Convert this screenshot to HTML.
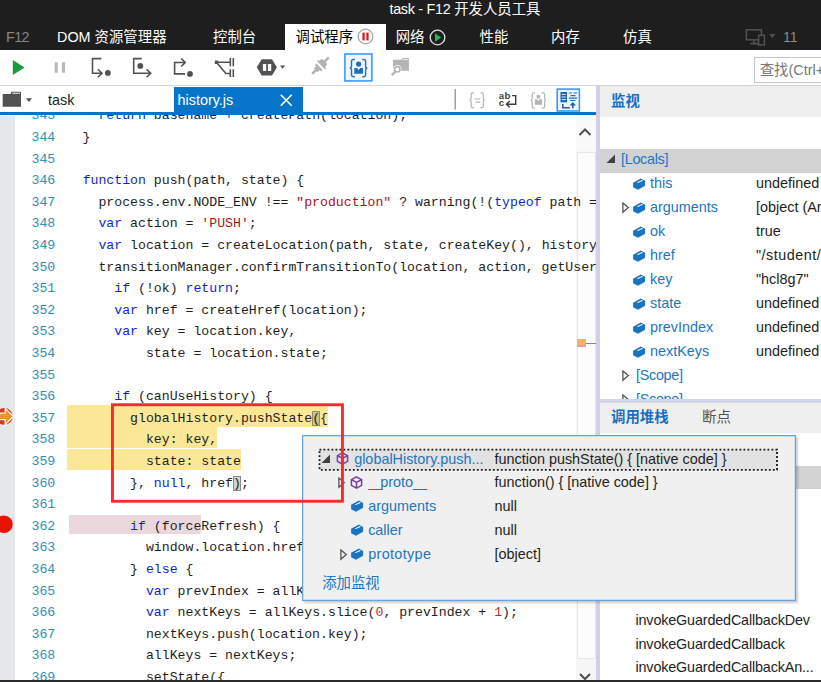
<!DOCTYPE html>
<html lang="zh-CN">
<head>
<meta charset="utf-8">
<title>task - F12 开发人员工具</title>
<style>
html,body{margin:0;padding:0;}
body{width:821px;height:682px;overflow:hidden;position:relative;background:#fff;font-family:"Liberation Sans","Noto Sans CJK SC",sans-serif;font-size:14px;color:#1e1e1e;}
.abs{position:absolute;}
#top{z-index:5;position:absolute;left:0;top:0;width:821px;height:50.400px;background:#1e1e1e;}
#title{position:absolute;left:0;top:0;width:930px;text-align:center;color:#fff;font-size:14.400px;line-height:18px;white-space:nowrap;}
.mt{position:absolute;top:24px;height:26px;line-height:26px;color:#fff;font-size:14.400px;white-space:nowrap;}
#mt-act{background:#fff;color:#000;left:284.500px;width:101.500px;top:23.600px;height:27px;line-height:26.800px;}
#toolbar{position:absolute;left:0;top:50px;width:821px;height:35px;background:#fff;border-bottom:1px solid #d4d4d4;}
#search{position:absolute;left:754.200px;top:7px;width:80px;height:26px;border:1px solid #c2c6e2;box-sizing:border-box;color:#777;font-size:14.400px;line-height:24.500px;padding-left:4.500px;white-space:nowrap;}
#filetabs{position:absolute;left:0;top:86px;width:597px;height:26px;background:#fff;}
#blueline{position:absolute;left:0;top:111.900px;width:596px;height:3.400px;z-index:3;background:#0574c9;}
#ftab{position:absolute;left:174px;top:0.900px;width:129px;height:25.100px;background:#0574c9;color:#fff;font-size:14.400px;line-height:26px;}
#code{position:absolute;left:0;top:113px;width:597px;height:569px;overflow:hidden;z-index:2;font-family:"Liberation Mono","DejaVu Sans Mono",monospace;font-size:13.2px;}
#gutter{position:absolute;left:0;top:3px;width:15px;height:566px;background:#e6e7e9;}
.ln{position:absolute;left:0;height:21.6px;line-height:21.6px;white-space:pre;width:1200px;}
.num{position:absolute;left:31.500px;color:#2b91af;}
.src{position:absolute;left:66.800px;color:#1e1e1e;}
.k{color:#0f1ed8;}
.s{color:#a31515;}
.n{color:#c03030;}
.hl{background:#fae896;}
.br{background:rgba(120,125,110,0.350);outline:1px solid #8c8c78;outline-offset:-1px;}
#vscroll{position:absolute;left:576px;top:114px;width:20px;height:568px;background:#f6f6f6;z-index:1;}
#split{position:absolute;left:596px;top:86px;width:3.600px;height:596px;background:#d0d2e4;z-index:3;}
#right{position:absolute;left:600px;top:86px;width:221px;height:596px;background:#fff;overflow:hidden;}
.ph{position:absolute;left:0;width:221px;height:30.700px;background:#efefef;}
.pht{position:absolute;top:0;line-height:30px;font-size:14.400px;white-space:nowrap;}
.pht.a{color:#1470c4;font-weight:bold;}
.row{position:absolute;left:0;width:400px;height:24px;line-height:24px;font-size:14.400px;white-space:nowrap;}
.row .nm{position:absolute;color:#2176c2;}
.row .vl{position:absolute;left:156px;color:#1e1e1e;}
.cube{position:absolute;}
.tri{position:absolute;}
#popup{z-index:4;position:absolute;left:301.800px;top:435.300px;width:494.300px;height:165.400px;box-sizing:border-box;border:1px solid #66a4e0;background:#f0f0f0;box-shadow:1.500px 1.500px 2px rgba(0,0,0,0.200), inset 0 0 0 1px rgba(150,195,240,0.450);}
#pin{position:absolute;left:0.400px;top:0.900px;width:492px;height:160px;white-space:nowrap;}
.prow{position:absolute;left:1.300px;width:489px;height:24px;line-height:24px;font-size:14.400px;white-space:nowrap;}
.prow .nm{position:absolute;color:#2176c2;margin-left:0.700px;}
.prow .vl{position:absolute;left:190px;color:#1e1e1e;}
#redbox{z-index:6;position:absolute;left:108px;top:400px;}
#bottom{z-index:9;position:absolute;left:0;top:679.500px;width:821px;height:3px;background:#2a2a2a;}
</style>
</head>
<body>
<div id="top">
  <div id="title"><span style="letter-spacing:-0.300px;">task - F12 </span>开发人员工具</div>
  <div class="mt" style="left:6px;color:#858585;letter-spacing:-0.600px;">F12</div>
  <div class="mt" style="left:57px;">DOM 资源管理器</div>
  <div class="mt" style="left:213px;">控制台</div>
  <div class="mt" id="mt-act"><span style="position:absolute;left:11px;">调试程序</span>
    <svg class="abs" style="left:72.300px;top:4.800px" width="17" height="17" viewBox="0 0 17 17"><circle cx="8.500" cy="8.500" r="7.300" fill="#fff" stroke="#a8a8a8" stroke-width="1.300"/><rect x="5.400" y="4.600" width="2.300" height="7.800" fill="#d01c24"/><rect x="9.300" y="4.600" width="2.300" height="7.800" fill="#d01c24"/></svg>
  </div>
  <div class="mt" style="left:395.700px;">网络</div>
  <svg class="abs" style="left:429px;top:28.600px" width="17" height="17" viewBox="0 0 17 17"><circle cx="8.500" cy="8.500" r="7.300" fill="none" stroke="#e4e4e4" stroke-width="1.300"/><path d="M6 4.300 L12.300 8.500 L6 12.700 Z" fill="#2cb34a"/></svg>
  <div class="mt" style="left:479.500px;">性能</div>
  <div class="mt" style="left:551px;">内存</div>
  <div class="mt" style="left:623px;">仿真</div>
  <svg class="abs" style="left:744px;top:27px" width="34" height="22" viewBox="744 27 34 22"><rect x="746.400" y="29.800" width="15" height="10" fill="none" stroke="#525252" stroke-width="1.500"/><path d="M754 40 V43.400 M750.500 43.600 H758" stroke="#525252" stroke-width="1.600"/><rect x="758.600" y="35.300" width="5.800" height="9.600" fill="#1e1e1e" stroke="#525252" stroke-width="1.500"/><path d="M769.300 34 H775.300 L772.300 38 Z" fill="#525252"/></svg>
  <div class="mt" style="left:783px;color:#8a8a8a;font-size:14px;">11</div>
</div>

<div id="toolbar">
  <svg class="abs" style="left:0;top:0" width="821" height="35" viewBox="0 50 821 35">
    <!-- play -->
    <path d="M12.800 60 L24.600 67.500 L12.800 75 Z" fill="#189a3c"/>
    <!-- pause -->
    <rect x="54.600" y="62.300" width="3.200" height="10.400" fill="#b9b9b9"/><rect x="61.900" y="62.300" width="3.200" height="10.400" fill="#b9b9b9"/>
    <g fill="none" stroke="#525252" stroke-width="1.600">
      <!-- step into -->
      <path d="M101.300 58.600 H92.500 V73.200 H101.800 M97.900 69.200 L102 73.200 L97.900 77.200"/>
      <!-- step over -->
      <path d="M141.700 58.600 H133.700 V73.200 H150.400 M146.600 69.200 L150.700 73.200 L146.600 77.200"/>
      <!-- step out -->
      <path d="M185 73.900 H174.600 V62.500 H184.600 M181.200 58.500 L185.200 62.500 L181.200 66.500"/>
      <!-- worker -->
      <path d="M216.400 62.200 H230.300 M216.400 62.200 L225.900 73.500 H230.300 M230.300 58.100 V66.300 M233.300 58.100 V66.300 M230.300 69.300 V77.100 M233.300 69.300 V77.100"/>
    </g>
    <g fill="#525252">
      <circle cx="107.800" cy="72.900" r="2.900"/>
      <circle cx="140.300" cy="65.900" r="2.900"/>
      <circle cx="190" cy="73.900" r="2.900"/>
      <rect x="214.800" y="60.600" width="3.400" height="3.400"/>
      <!-- exceptions -->
      <path d="M261.700 59.300 H272 L276.900 67.350 L272 75.400 H261.700 L256.800 67.350 Z"/>
      <path d="M280 65.500 H285.200 L282.600 68.700 Z"/>
    </g>
    <rect x="262.900" y="63.900" width="3.300" height="7.200" rx="0.600" fill="#fff"/><rect x="267.900" y="63.900" width="3.300" height="7.200" rx="0.600" fill="#fff"/>
    <!-- plug -->
    <g transform="translate(320.300 65.800) rotate(-45)">
      <rect x="-11.500" y="-1.200" width="6" height="2.400" fill="#b4b4b4"/>
      <path d="M-6.500 -2.600 H-3.500 V-4.300 H-1.200 V4.300 H-3.500 V2.600 H-6.500 Z" fill="#b4b4b4"/>
      <path d="M1.200 -4.300 H3.400 Q6.500 -4.300 6.500 -1.500 V1.500 Q6.500 4.300 3.400 4.300 H1.200 Z" fill="#b4b4b4"/>
      <rect x="6" y="-1.200" width="6" height="2.400" fill="#b4b4b4"/>
    </g>
    <path d="M317.400 60.600 L325.800 69" stroke="#b4b4b4" stroke-width="1.400"/>
    <!-- just my code selected -->
    <rect x="344.900" y="54" width="27" height="26.900" fill="#f0f5fb" stroke="#3a9af8" stroke-width="1.600"/>
    <g fill="none" stroke="#1e74bc" stroke-width="1.400">
      <path d="M354.800 59.500 H353.300 Q351.500 59.500 351.500 61.300 V66 Q351.500 68.100 349.700 68.100 Q351.500 68.100 351.500 70.200 V75 Q351.500 76.700 353.300 76.700 H354.800"/>
      <path d="M362.300 59.500 H363.800 Q365.600 59.500 365.600 61.300 V66 Q365.600 68.100 367.400 68.100 Q365.600 68.100 365.600 70.200 V75 Q365.600 76.700 363.800 76.700 H362.300"/>
    </g>
    <circle cx="358.600" cy="64.100" r="2.600" fill="#1a72bc"/>
    <path d="M354.300 68 H357 L358.650 70 L360.300 68 H363 V73.800 H354.300 Z" fill="#1a72bc"/>
    <!-- find in files -->
    <path d="M393 59.800 H401.500 L402.600 58.100 H408.900 V70.700 H393 Z" fill="#b4b4b4"/>
    <rect x="403" y="58.900" width="5.200" height="1.200" fill="#e8e8e8"/>
    <circle cx="397.300" cy="69.300" r="4.200" fill="#fff"/>
    <circle cx="397.300" cy="69.300" r="2.700" fill="#fff" stroke="#b4b4b4" stroke-width="1.700"/>
    <path d="M395.300 71.500 L391.900 75.200" stroke="#b4b4b4" stroke-width="2.300"/>
  </svg>
  <div id="search">查找(Ctrl+F)</div>
</div>

<div id="filetabs">
  <svg class="abs" style="left:0;top:0" width="597" height="26" viewBox="0 86 597 26">
    <!-- folder -->
    <path d="M2.700 94 H10.500 L11.500 91.700 H20.200 Q21 91.700 21 92.500 V106.800 H2.700 Z" fill="#525252"/>
    <rect x="12.300" y="92.700" width="7.700" height="1.100" fill="#fff" opacity="0.850"/>
    <path d="M26 98.300 H32 L29 101.900 Z" fill="#525252"/>
    <!-- separator -->
    <rect x="454.600" y="89" width="1.200" height="20.600" fill="#8a8a8a"/>
    <!-- pretty print -->
    <g transform="translate(477.200 100.300) scale(0.860) translate(-358.550 -68.100)">
      <g fill="none" stroke="#b4b4b4" stroke-width="1.400">
        <path d="M354.800 59.500 H353.300 Q351.500 59.500 351.500 61.300 V66 Q351.500 68.100 349.700 68.100 Q351.500 68.100 351.500 70.200 V75 Q351.500 76.700 353.300 76.700 H354.800"/>
        <path d="M362.300 59.500 H363.800 Q365.600 59.500 365.600 61.300 V66 Q365.600 68.100 367.400 68.100 Q365.600 68.100 365.600 70.200 V75 Q365.600 76.700 363.800 76.700 H362.300"/>
        <path d="M355.500 66.600 H362 M356.800 70.200 H362"/>
      </g>
    </g>
    <!-- word wrap -->
    <path d="M512 95.600 H515.700 V104.200 H506.600 M509.700 101.100 L506.400 104.200 L509.700 107.300" fill="none" stroke="#3c3c3c" stroke-width="1.400"/>
    <text x="498.800" y="99.200" font-family="Liberation Sans, sans-serif" font-size="9.600" font-weight="bold" letter-spacing="0.300" fill="#444">ab</text>
    <text x="498.800" y="106" font-family="Liberation Sans, sans-serif" font-size="9.600" font-weight="bold" fill="#444">c</text>
    <!-- just my code gray -->
    <g transform="translate(538.400 100.450) scale(0.880) translate(-358.550 -68.100)">
      <g fill="none" stroke="#b4b4b4" stroke-width="1.400">
        <path d="M354.800 59.500 H353.300 Q351.500 59.500 351.500 61.300 V66 Q351.500 68.100 349.700 68.100 Q351.500 68.100 351.500 70.200 V75 Q351.500 76.700 353.300 76.700 H354.800"/>
        <path d="M362.300 59.500 H363.800 Q365.600 59.500 365.600 61.300 V66 Q365.600 68.100 367.400 68.100 Q365.600 68.100 365.600 70.200 V75 Q365.600 76.700 363.800 76.700 H362.300"/>
      </g>
      <circle cx="358.600" cy="63.800" r="2.300" fill="#b4b4b4"/>
      <path d="M354.600 66.800 H357 L358.650 68.800 L360.300 66.800 H362.700 V73 H354.600 Z" fill="#b4b4b4"/>
    </g>
    <!-- selected -->
    <rect x="557.200" y="89.100" width="22.200" height="21.900" fill="#eef4fb" stroke="#3a9af8" stroke-width="1.600"/>
    <rect x="560.500" y="92" width="6.500" height="10.300" fill="#1f64a8"/>
    <path d="M561.700 94.400 H565.800 M561.700 97 H565.800 M561.700 99.600 H565.800" stroke="#fff" stroke-width="0.900"/>
    <path d="M568.800 93 H572 M573.500 93 H577.100 M570.500 95.600 H575.500 M568.800 98.100 H577.100 M570 100.500 H575.500" stroke="#2a72b8" stroke-width="1.200"/>
    <path d="M562.800 104.100 V107.800 H569.800" fill="none" stroke="#1f64a8" stroke-width="1.500"/>
    <path d="M569.600 105.600 L572.800 102.100 L576 105.600 Z" fill="#1f64a8"/>
    <rect x="572" y="104.500" width="1.600" height="3.900" fill="#1f64a8"/>
  </svg>
  <div class="abs" style="left:48px;top:0;line-height:28px;font-size:14.400px;color:#1e1e1e;">task</div>
  <div id="ftab"><span class="abs" style="left:3.500px;top:0.200px;">history.js</span>
    <svg class="abs" style="left:106.300px;top:7.600px" width="12.500" height="12.500" viewBox="0 0 13 13"><path d="M0.800 0.800 L12.200 12.200 M12.200 0.800 L0.800 12.200" stroke="#fff" stroke-width="1.700"/></svg>
  </div>
</div>
<div id="blueline"></div>

<div id="code">
  <div id="gutter"></div>
  <!-- highlight backgrounds -->
  <div class="abs" style="left:67px;top:292.400px;width:261px;height:21.450px;background:#fae896;"></div>
  <div class="abs" style="left:67px;top:314px;width:150px;height:21.450px;background:#fae896;"></div>
  <div class="abs" style="left:67px;top:335.600px;width:174px;height:21.400px;background:#fae896;"></div>
  <div class="abs" style="left:68.500px;top:401.800px;width:132px;height:19.400px;background:#ead8dc;"></div>
<div class="ln" style="top:-7.70px"><span class="num">343</span><span class="src">    <span class="k">return</span> basename + createPath(location);</span></div>
<div class="ln" style="top:13.90px"><span class="num">344</span><span class="src">  }</span></div>
<div class="ln" style="top:35.50px"><span class="num">345</span><span class="src"></span></div>
<div class="ln" style="top:57.10px"><span class="num">346</span><span class="src">  <span class="k">function</span> push(path, state) {</span></div>
<div class="ln" style="top:78.70px"><span class="num">347</span><span class="src">    process.env.NODE_ENV !== <span class="s">"production"</span> ? warning(!(<span class="k">typeof</span> path === </span></div>
<div class="ln" style="top:100.30px"><span class="num">348</span><span class="src">    <span class="k">var</span> action = <span class="s">'PUSH'</span>;</span></div>
<div class="ln" style="top:121.90px"><span class="num">349</span><span class="src">    <span class="k">var</span> location = createLocation(path, state, createKey(), history.location);</span></div>
<div class="ln" style="top:143.50px"><span class="num">350</span><span class="src">    transitionManager.confirmTransitionTo(location, action, getUserConfirmation, </span></div>
<div class="ln" style="top:165.10px"><span class="num">351</span><span class="src">      <span class="k">if</span> (!ok) <span class="k">return</span>;</span></div>
<div class="ln" style="top:186.70px"><span class="num">352</span><span class="src">      <span class="k">var</span> href = createHref(location);</span></div>
<div class="ln" style="top:208.30px"><span class="num">353</span><span class="src">      <span class="k">var</span> key = location.key,</span></div>
<div class="ln" style="top:229.90px"><span class="num">354</span><span class="src">          state = location.state;</span></div>
<div class="ln" style="top:251.50px"><span class="num">355</span><span class="src"></span></div>
<div class="ln" style="top:273.10px"><span class="num">356</span><span class="src">      <span class="k">if</span> (canUseHistory) {</span></div>
<div class="ln" style="top:294.70px"><span class="num">357</span><span class="src">        <span class="hl">globalHistory.pushState</span><span class="br">(</span>{</span></div>
<div class="ln" style="top:316.30px"><span class="num">358</span><span class="src">          <span class="hl">key: key,</span></span></div>
<div class="ln" style="top:337.90px"><span class="num">359</span><span class="src">          <span class="hl">state: state</span></span></div>
<div class="ln" style="top:359.50px"><span class="num">360</span><span class="src">        }, <span class="k">null</span>, href<span class="br">)</span>;</span></div>
<div class="ln" style="top:381.10px"><span class="num">361</span><span class="src"></span></div>
<div class="ln" style="top:402.70px"><span class="num">362</span><span class="src">        <span class="k">if</span> (forceRefresh) {</span></div>
<div class="ln" style="top:424.30px"><span class="num">363</span><span class="src">          window.location.href = href;</span></div>
<div class="ln" style="top:445.90px"><span class="num">364</span><span class="src">        } <span class="k">else</span> {</span></div>
<div class="ln" style="top:467.50px"><span class="num">365</span><span class="src">          <span class="k">var</span> prevIndex = allKeys.indexOf(history.location.key);</span></div>
<div class="ln" style="top:489.10px"><span class="num">366</span><span class="src">          <span class="k">var</span> nextKeys = allKeys.slice(<span class="n">0</span>, prevIndex + <span class="n">1</span>);</span></div>
<div class="ln" style="top:510.70px"><span class="num">367</span><span class="src">          nextKeys.push(location.key);</span></div>
<div class="ln" style="top:532.30px"><span class="num">368</span><span class="src">          allKeys = nextKeys;</span></div>
<div class="ln" style="top:553.90px"><span class="num">369</span><span class="src">          setState({</span></div>
  <!-- breakpoint markers -->
  <svg class="abs" style="left:0;top:290px" width="16" height="135" viewBox="0 403 16 135">
    <circle cx="4.300" cy="416.400" r="8.400" fill="#e2341c"/>
    <path d="M-2 413.100 H5.200 V408.400 L13.400 416.400 L5.200 424.400 V419.700 H-2 Z" fill="#f6921e" stroke="#fff" stroke-width="1.300" stroke-linejoin="miter"/>
    <circle cx="3.900" cy="524.200" r="8.800" fill="#e81208"/>
  </svg>

</div>

<div id="vscroll">
  <div class="abs" style="left:0;top:0;width:20px;height:37px;background:#f9f9f9;"></div>
  <div class="abs" style="left:0.500px;top:37.500px;width:19px;height:507px;box-sizing:border-box;border:1px solid #e6e6e6;background:#fcfcfc;"></div>
  <svg class="abs" style="left:2px;top:12.500px" width="14" height="10" viewBox="0 0 14 10"><path d="M1.500 8 L7 2.500 L12.500 8" fill="none" stroke="#505050" stroke-width="2"/></svg>
  <svg class="abs" style="left:2px;top:557.500px" width="14" height="10" viewBox="0 0 14 10"><path d="M2 2 L7 7 L12 2" fill="none" stroke="#505050" stroke-width="2"/></svg>
  <div class="abs" style="left:1px;top:225px;width:9px;height:6px;background:#f0b46e;"></div><div class="abs" style="left:1px;top:231px;width:9px;height:2px;background:#e89aa0;"></div>
  <div class="abs" style="left:10px;top:228.500px;width:10px;height:1.500px;background:#7f7fc8;"></div>
</div>
<div id="split"></div>

<div id="right">
  <div class="ph" style="top:0;"><span class="pht a" style="left:11px;">监视</span></div>
  <div class="abs" style="left:0;top:63px;width:221px;height:24px;background:#d2d2d2;"></div>
  <div class="row" style="top:61px;"><svg class="tri" style="left:6px;top:7px" width="10" height="10" viewBox="0 0 10 10"><path d="M9 0.500 V9 H0.500 Z" fill="#404040"/></svg><span class="nm" style="left:21px;letter-spacing:-0.300px;">[Locals]</span></div>
<div class="row" style="top:85px;"><svg class="cube" style="left:33px;top:6.800px" width="13" height="12" viewBox="0 0 13 12"><path d="M0.100 4.700 L7.900 0.400 L12.100 2.900 L12.100 7.700 L5 11.800 L0.100 9.200 Z" fill="#1a74c2"/><path d="M3.900 4.400 L8.900 2.100 L9.900 2.700 L4.900 5 Z" fill="#fff"/></svg><span class="nm" style="left:50px;">this</span><span class="vl">undefined</span></div>
<div class="row" style="top:109px;"><svg class="tri" style="left:21.5px;top:7px" width="8" height="12" viewBox="0 0 8 12"><path d="M0.900 0.900 L6.300 5.600 L0.900 10.300 Z" fill="none" stroke="#555" stroke-width="1.300"/></svg><svg class="cube" style="left:33px;top:6.800px" width="13" height="12" viewBox="0 0 13 12"><path d="M0.100 4.700 L7.900 0.400 L12.100 2.900 L12.100 7.700 L5 11.800 L0.100 9.200 Z" fill="#1a74c2"/><path d="M3.900 4.400 L8.900 2.100 L9.900 2.700 L4.900 5 Z" fill="#fff"/></svg><span class="nm" style="left:50px;">arguments</span><span class="vl">[object (Arguments)]</span></div>
<div class="row" style="top:133px;"><svg class="cube" style="left:33px;top:6.800px" width="13" height="12" viewBox="0 0 13 12"><path d="M0.100 4.700 L7.900 0.400 L12.100 2.900 L12.100 7.700 L5 11.800 L0.100 9.200 Z" fill="#1a74c2"/><path d="M3.900 4.400 L8.900 2.100 L9.900 2.700 L4.900 5 Z" fill="#fff"/></svg><span class="nm" style="left:50px;">ok</span><span class="vl">true</span></div>
<div class="row" style="top:157px;"><svg class="cube" style="left:33px;top:6.800px" width="13" height="12" viewBox="0 0 13 12"><path d="M0.100 4.700 L7.900 0.400 L12.100 2.900 L12.100 7.700 L5 11.800 L0.100 9.200 Z" fill="#1a74c2"/><path d="M3.900 4.400 L8.900 2.100 L9.900 2.700 L4.900 5 Z" fill="#fff"/></svg><span class="nm" style="left:50px;">href</span><span class="vl" style="letter-spacing:0.500px;">"/student/task"</span></div>
<div class="row" style="top:181px;"><svg class="cube" style="left:33px;top:6.800px" width="13" height="12" viewBox="0 0 13 12"><path d="M0.100 4.700 L7.900 0.400 L12.100 2.900 L12.100 7.700 L5 11.800 L0.100 9.200 Z" fill="#1a74c2"/><path d="M3.900 4.400 L8.900 2.100 L9.900 2.700 L4.900 5 Z" fill="#fff"/></svg><span class="nm" style="left:50px;">key</span><span class="vl">"hcl8g7"</span></div>
<div class="row" style="top:205px;"><svg class="cube" style="left:33px;top:6.800px" width="13" height="12" viewBox="0 0 13 12"><path d="M0.100 4.700 L7.900 0.400 L12.100 2.900 L12.100 7.700 L5 11.800 L0.100 9.200 Z" fill="#1a74c2"/><path d="M3.900 4.400 L8.900 2.100 L9.900 2.700 L4.900 5 Z" fill="#fff"/></svg><span class="nm" style="left:50px;">state</span><span class="vl">undefined</span></div>
<div class="row" style="top:229px;"><svg class="cube" style="left:33px;top:6.800px" width="13" height="12" viewBox="0 0 13 12"><path d="M0.100 4.700 L7.900 0.400 L12.100 2.900 L12.100 7.700 L5 11.800 L0.100 9.200 Z" fill="#1a74c2"/><path d="M3.900 4.400 L8.900 2.100 L9.900 2.700 L4.900 5 Z" fill="#fff"/></svg><span class="nm" style="left:50px;">prevIndex</span><span class="vl">undefined</span></div>
<div class="row" style="top:253px;"><svg class="cube" style="left:33px;top:6.800px" width="13" height="12" viewBox="0 0 13 12"><path d="M0.100 4.700 L7.900 0.400 L12.100 2.900 L12.100 7.700 L5 11.800 L0.100 9.200 Z" fill="#1a74c2"/><path d="M3.900 4.400 L8.900 2.100 L9.900 2.700 L4.900 5 Z" fill="#fff"/></svg><span class="nm" style="left:50px;">nextKeys</span><span class="vl">undefined</span></div>
<div class="row" style="top:277px;"><svg class="tri" style="left:22.2px;top:7px" width="8" height="12" viewBox="0 0 8 12"><path d="M0.900 0.900 L6.300 5.600 L0.900 10.300 Z" fill="none" stroke="#555" stroke-width="1.300"/></svg><span class="nm" style="left:36px;letter-spacing:-0.300px;">[Scope]</span></div>
<div class="row" style="top:301px;"><svg class="tri" style="left:22.2px;top:7px" width="8" height="12" viewBox="0 0 8 12"><path d="M0.900 0.900 L6.300 5.600 L0.900 10.300 Z" fill="none" stroke="#555" stroke-width="1.300"/></svg><span class="nm" style="left:36px;letter-spacing:-0.300px;">[Scope]</span></div>
  <div class="abs" style="left:0;top:313px;width:221px;height:4px;background:#d3d5e6;"></div>
  <div class="ph" style="top:317px;height:29.600px;"><span class="pht a" style="left:11px;line-height:28px;">调用堆栈</span><span class="pht" style="left:102px;line-height:28px;color:#525252;">断点</span></div>
  <div class="abs" style="left:0;top:380.300px;width:221px;height:22.500px;background:#d2d2d2;"></div>
  <div class="row" style="top:522px;"><span class="vl" style="left:35.500px;letter-spacing:-0.170px;">invokeGuardedCallbackDev</span></div>
  <div class="row" style="top:545.500px;"><span class="vl" style="left:35.500px;letter-spacing:-0.170px;">invokeGuardedCallback</span></div>
  <div class="row" style="top:569px;"><span class="vl" style="left:35.500px;letter-spacing:-0.170px;">invokeGuardedCallbackAn...</span></div>
</div>

<svg id="redbox" width="240" height="106" viewBox="108 400 240 106"><rect x="112.450" y="404.750" width="230" height="96.500" fill="none" stroke="#f82a2e" stroke-width="2.900"/></svg>
<div id="popup"><div id="pin">
  <svg class="abs" style="left:15.300px;top:11px" width="461" height="24" viewBox="0 0 461 24"><rect x="1.500" y="1.600" width="457.500" height="20.200" fill="#e2e2e2" stroke="#151515" stroke-width="1.800" stroke-dasharray="1.800 2.200"/></svg>
<div class="prow" style="top:9.4px;"><svg class="tri" style="left:17px;top:7px" width="10" height="10" viewBox="0 0 10 10"><path d="M9 0.500 V9 H0.500 Z" fill="#404040"/></svg><svg class="cube" style="left:32px;top:5.500px" width="13" height="13" viewBox="0 0 14 14"><path d="M7 1 L12.500 4 V10 L7 13 L1.500 10 V4 Z M1.500 4 L7 7 L12.500 4 M7 7 V13" fill="none" stroke="#7a3c9e" stroke-width="1.600"/></svg><span class="nm" style="left:49px;">globalHistory.push...</span><span class="vl">function pushState() { [native code] }</span></div>
<div class="prow" style="top:32.9px;"><svg class="tri" style="left:34px;top:7px" width="8" height="12" viewBox="0 0 8 12"><path d="M0.900 0.900 L6.300 5.600 L0.900 10.300 Z" fill="none" stroke="#555" stroke-width="1.300"/></svg><svg class="cube" style="left:46px;top:5.500px" width="13" height="13" viewBox="0 0 14 14"><path d="M7 1 L12.500 4 V10 L7 13 L1.500 10 V4 Z M1.500 4 L7 7 L12.500 4 M7 7 V13" fill="none" stroke="#7a3c9e" stroke-width="1.600"/></svg><span class="nm" style="left:63px;"><span style="letter-spacing:-2px;">__</span>proto<span style="letter-spacing:-2px;">__</span></span><span class="vl">function() { [native code] }</span></div>
<div class="prow" style="top:56.4px;"><svg class="cube" style="left:46.9px;top:6.800px" width="13" height="12" viewBox="0 0 13 12"><path d="M0.100 4.700 L7.900 0.400 L12.100 2.900 L12.100 7.700 L5 11.800 L0.100 9.200 Z" fill="#1a74c2"/><path d="M3.900 4.400 L8.900 2.100 L9.900 2.700 L4.900 5 Z" fill="#fff"/></svg><span class="nm" style="left:63px;">arguments</span><span class="vl">null</span></div>
<div class="prow" style="top:80.4px;"><svg class="cube" style="left:46.9px;top:6.800px" width="13" height="12" viewBox="0 0 13 12"><path d="M0.100 4.700 L7.900 0.400 L12.100 2.900 L12.100 7.700 L5 11.800 L0.100 9.200 Z" fill="#1a74c2"/><path d="M3.900 4.400 L8.900 2.100 L9.900 2.700 L4.900 5 Z" fill="#fff"/></svg><span class="nm" style="left:63px;">caller</span><span class="vl">null</span></div>
<div class="prow" style="top:104.4px;"><svg class="tri" style="left:35.5px;top:7px" width="8" height="12" viewBox="0 0 8 12"><path d="M0.900 0.900 L6.300 5.600 L0.900 10.300 Z" fill="none" stroke="#555" stroke-width="1.300"/></svg><svg class="cube" style="left:46.9px;top:6.800px" width="13" height="12" viewBox="0 0 13 12"><path d="M0.100 4.700 L7.900 0.400 L12.100 2.900 L12.100 7.700 L5 11.800 L0.100 9.200 Z" fill="#1a74c2"/><path d="M3.900 4.400 L8.900 2.100 L9.900 2.700 L4.900 5 Z" fill="#fff"/></svg><span class="nm" style="left:63px;"><span style="letter-spacing:0.350px;">prototype</span></span><span class="vl">[object]</span></div>
<div class="abs" style="left:19px;top:134px;line-height:24px;font-size:14.400px;color:#2176c2;">添加监视</div>
</div></div>
<div id="bottom"></div>
</body>
</html>
